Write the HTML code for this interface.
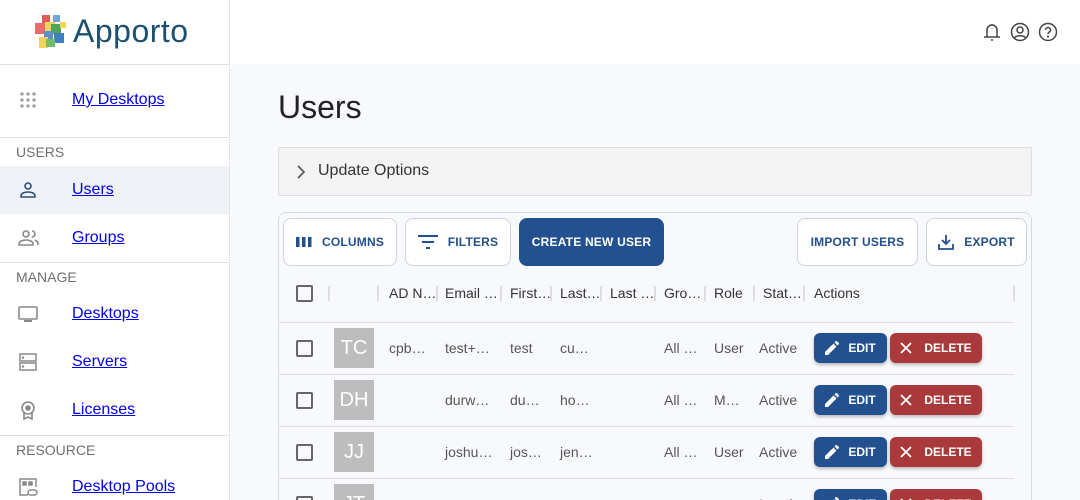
<!DOCTYPE html>
<html style="width:1080px;height:500px;overflow:hidden"><head><style>
*{box-sizing:border-box;margin:0;padding:0}
body{width:1080px;height:500px;overflow:hidden;font-family:"Liberation Sans",Roboto,sans-serif;background:#f8f9fc;position:relative;color:#222}
.abs{position:absolute}
#side{left:0;top:0;width:230px;height:500px;background:#fff;border-right:1px solid #e2e4e8}
#top{left:230px;top:0;width:850px;height:64px;background:#fff}
.hr{position:absolute;left:0;width:229px;height:1px;background:#e0e0e0}
.lab{position:absolute;left:16px;font-size:14px;color:#6f6f6f}
.item{position:absolute;left:0;width:229px;height:48px}
.item a{position:absolute;left:72px;top:50%;transform:translateY(-50%);color:#0000ee;font-size:16px;text-decoration:underline}
.item svg{position:absolute;left:18px;top:50%;transform:translateY(-50%)}
.btn{position:absolute;top:218px;height:48px;border:1px solid #d0d4da;border-radius:8px;background:#fff;color:#234f8d;font-size:12px;font-weight:bold;letter-spacing:.2px;display:flex;align-items:center;justify-content:center;gap:10px}
.th{position:absolute;top:285px;font-size:14px;color:#333;white-space:nowrap}
.sep{position:absolute;top:286px;width:2px;height:15px;background:#ddd}
.cb{position:absolute;left:296px;width:17px;height:17px;border:2px solid #666;border-radius:2px}
.av{position:absolute;left:334px;width:40px;height:40px;background:#bdbdbd;color:#fff;font-size:20px;display:flex;align-items:center;justify-content:center}
.td{position:absolute;font-size:14px;color:#555}
.rl{position:absolute;left:279px;width:735px;height:1px;background:#e0e0e0}
.ed{position:absolute;left:814px;width:73px;height:30px;background:#23518f;border-radius:6px;color:#fff;font-size:12px;font-weight:bold;display:flex;align-items:center;justify-content:center;gap:9px;box-shadow:0 2px 3px rgba(0,0,0,.25)}
.de{position:absolute;left:890px;width:92px;height:30px;background:#a9393a;border-radius:6px;color:#fff;font-size:12px;font-weight:bold;display:flex;align-items:center;justify-content:center;gap:12px;box-shadow:0 2px 3px rgba(0,0,0,.25)}
</style></head><body>
<div id="side" class="abs">
 <svg class="abs" style="left:34px;top:14px" width="36" height="36" viewBox="0 0 36 36">
  <rect x="1" y="9" width="11" height="11" fill="#e86a6a"/><rect x="8" y="1" width="8" height="8" fill="#e05a5a"/><rect x="19" y="1" width="7" height="7" fill="#6aa9d8"/>
  <rect x="11" y="8" width="10" height="10" fill="#f2d45a"/><rect x="17" y="10" width="10" height="10" fill="#4ea65a"/><rect x="26" y="8" width="6" height="6" fill="#f2d45a"/>
  <rect x="10" y="17" width="9" height="9" fill="#5b8fc9"/><rect x="20" y="19" width="10" height="10" fill="#3f7fbf"/><rect x="5" y="23" width="9" height="11" fill="#f2d45a"/><rect x="12" y="25" width="9" height="8" fill="#6fbf6a"/>
 </svg>
 <div class="abs" style="left:73px;top:13px;font-size:32px;color:#1b5071;letter-spacing:.5px">Apporto</div>
 <div class="hr" style="top:64px"></div>
 <div class="item" style="top:76px"><svg width="20" height="20" viewBox="0 0 20 20" fill="#999"><circle cx="4" cy="4" r="1.6"/><circle cx="10" cy="4" r="1.6"/><circle cx="16" cy="4" r="1.6"/><circle cx="4" cy="10" r="1.6"/><circle cx="10" cy="10" r="1.6"/><circle cx="16" cy="10" r="1.6"/><circle cx="4" cy="16" r="1.6"/><circle cx="10" cy="16" r="1.6"/><circle cx="16" cy="16" r="1.6"/></svg><a>My Desktops</a></div>
 <div class="hr" style="top:137px"></div>
 <div class="lab" style="top:144px">USERS</div>
 <div class="item" style="top:166px;background:#eef1f5"><svg width="20" height="20" viewBox="0 0 20 20" fill="none" stroke="#2d4f78" stroke-width="1.6"><circle cx="10" cy="6" r="3"/><path d="M3 17v-1c0-3 4-4 7-4s7 1 7 4v1z"/></svg><a>Users</a></div>
 <div class="item" style="top:214px"><svg width="22" height="20" viewBox="0 0 22 20" fill="none" stroke="#888" stroke-width="1.6"><circle cx="8" cy="6" r="3"/><path d="M1 17v-1c0-3 4-4 7-4s7 1 7 4v1z"/><path d="M14 3a3 3 0 010 6M17 12c2 1 3 2 3 4v1"/></svg><a>Groups</a></div>
 <div class="hr" style="top:262px"></div>
 <div class="lab" style="top:269px">MANAGE</div>
 <div class="item" style="top:290px"><svg width="20" height="20" viewBox="0 0 20 20" fill="none" stroke="#888" stroke-width="1.6"><rect x="1" y="3" width="18" height="12" rx="1"/><path d="M6 17h8" stroke-width="2"/></svg><a>Desktops</a></div>
 <div class="item" style="top:338px"><svg width="20" height="20" viewBox="0 0 20 20" fill="none" stroke="#888" stroke-width="1.5"><rect x="2" y="2" width="16" height="7"/><rect x="2" y="11" width="16" height="7"/><circle cx="5" cy="5.5" r=".5"/><circle cx="5" cy="14.5" r=".5"/></svg><a>Servers</a></div>
 <div class="item" style="top:386px"><svg width="20" height="20" viewBox="0 0 20 20" fill="none" stroke="#888" stroke-width="1.6"><circle cx="10" cy="8" r="6"/><circle cx="10" cy="8" r="2" fill="#888"/><path d="M6 13v6l4-2 4 2v-6"/></svg><a>Licenses</a></div>
 <div class="hr" style="top:435px"></div>
 <div class="lab" style="top:442px">RESOURCE</div>
 <div class="item" style="top:463px"><svg width="20" height="20" viewBox="0 0 20 20" fill="none" stroke="#888" stroke-width="1.5"><path d="M10 18H2V2h16v8"/><rect x="5" y="5" width="3" height="3" fill="#888"/><rect x="11" y="5" width="3" height="3" fill="#888"/><rect x="10" y="13" width="9" height="5" rx="2.5"/></svg><a>Desktop Pools</a></div>
</div>
<div id="top" class="abs">
 <svg class="abs" style="left:752px;top:22px" width="80" height="20" viewBox="0 0 80 20" fill="none" stroke="#444" stroke-width="1.5">
  <path d="M5 15V8a5 5 0 0110 0v7M2 15h16M9 18h2M10 2v1"/>
  <circle cx="38" cy="10" r="8.5"/><circle cx="38" cy="8" r="3"/><path d="M32 16c3-3 9-3 12 0"/>
  <circle cx="66" cy="10" r="8.5"/><path d="M63.5 8a2.5 2.5 0 115 0c0 2-2.5 2-2.5 4"/><circle cx="66" cy="14.5" r=".4" fill="#444"/>
 </svg>
</div>
<div class="abs" style="left:278px;top:89px;font-size:32px;color:#222">Users</div>
<div class="abs" style="left:278px;top:147px;width:754px;height:49px;background:#f3f3f3;border:1px solid #dedede;border-radius:2px">
 <svg class="abs" style="left:16px;top:17px" width="12" height="14" viewBox="0 0 12 14" fill="none" stroke="#555" stroke-width="1.6"><path d="M3 1l6 6-6 6"/></svg>
 <div class="abs" style="left:39px;top:14px;font-size:16px;color:#333">Update Options</div>
</div>
<div class="abs" style="left:278px;top:212px;width:754px;height:320px;border:1px solid #d8dbe0;border-radius:8px"></div>
<div class="btn" style="left:283px;width:114px"><svg width="16" height="12" viewBox="0 0 16 12" fill="#234f8d"><rect x="0" y="1" width="3.5" height="10"/><rect x="6" y="1" width="3.5" height="10"/><rect x="12" y="1" width="3.5" height="10"/></svg>COLUMNS</div>
<div class="btn" style="left:405px;width:106px"><svg width="20" height="14" viewBox="0 0 20 14" fill="#234f8d"><rect x="0" y="0" width="20" height="2"/><rect x="4" y="6" width="12" height="2"/><rect x="8" y="12" width="4" height="2"/></svg>FILTERS</div>
<div class="btn" style="left:519px;width:145px;background:#23518f;border-color:#23518f;color:#fff">CREATE NEW USER</div>
<div class="btn" style="left:797px;width:121px">IMPORT USERS</div>
<div class="btn" style="left:926px;width:101px"><svg width="16" height="16" viewBox="0 0 16 16" fill="none" stroke="#234f8d" stroke-width="1.8"><path d="M8 1v9M4 6l4 4 4-4M1 10v5h14v-5"/></svg>EXPORT</div>
<div class="cb" style="top:285px"></div>
<div class="sep" style="left:328px"></div><div class="sep" style="left:377px"></div>
<div class="th" style="left:389px">AD N…</div><div class="sep" style="left:436px"></div>
<div class="th" style="left:445px">Email …</div><div class="sep" style="left:500px"></div>
<div class="th" style="left:510px">First…</div><div class="sep" style="left:550px"></div>
<div class="th" style="left:560px">Last…</div><div class="sep" style="left:600px"></div>
<div class="th" style="left:610px">Last …</div><div class="sep" style="left:654px"></div>
<div class="th" style="left:664px">Gro…</div><div class="sep" style="left:704px"></div>
<div class="th" style="left:714px">Role</div><div class="sep" style="left:753px"></div>
<div class="th" style="left:763px">Stat…</div><div class="sep" style="left:803px"></div>
<div class="th" style="left:814px">Actions</div><div class="sep" style="left:1013px"></div>
<div class="rl" style="top:322px"></div>
<div class="rl" style="top:374px"></div>
<div class="rl" style="top:426px"></div>
<div class="rl" style="top:478px"></div>
<div class="cb" style="top:340px"></div><div class="av" style="top:328px">TC</div>
<div class="td" style="left:389px;top:340px">cpb…</div><div class="td" style="left:445px;top:340px">test+…</div><div class="td" style="left:510px;top:340px">test</div><div class="td" style="left:560px;top:340px">cu…</div><div class="td" style="left:664px;top:340px">All …</div><div class="td" style="left:714px;top:340px">User</div><div class="td" style="left:759px;top:340px">Active</div>
<div class="cb" style="top:392px"></div><div class="av" style="top:380px">DH</div>
<div class="td" style="left:445px;top:392px">durw…</div><div class="td" style="left:510px;top:392px">du…</div><div class="td" style="left:560px;top:392px">ho…</div><div class="td" style="left:664px;top:392px">All …</div><div class="td" style="left:714px;top:392px">M…</div><div class="td" style="left:759px;top:392px">Active</div>
<div class="cb" style="top:444px"></div><div class="av" style="top:432px">JJ</div>
<div class="td" style="left:445px;top:444px">joshu…</div><div class="td" style="left:510px;top:444px">jos…</div><div class="td" style="left:560px;top:444px">jen…</div><div class="td" style="left:664px;top:444px">All …</div><div class="td" style="left:714px;top:444px">User</div><div class="td" style="left:759px;top:444px">Active</div>
<div class="cb" style="top:496px"></div><div class="av" style="top:484px">JT</div>
<div class="td" style="left:759px;top:496px">Inactive</div>
<div class="ed" style="top:333px"><svg width="14" height="14" viewBox="0 0 14 14" fill="#fff"><path d="M0 11v3h3l8.5-8.5-3-3zM13.7 3.3a1 1 0 000-1.4L12.1.3a1 1 0 00-1.4 0L9.5 1.5l3 3z"/></svg>EDIT</div>
<div class="de" style="top:333px"><svg width="12" height="12" viewBox="0 0 12 12" stroke="#fff" stroke-width="1.8"><path d="M1 1l10 10M11 1L1 11"/></svg>DELETE</div>
<div class="ed" style="top:385px"><svg width="14" height="14" viewBox="0 0 14 14" fill="#fff"><path d="M0 11v3h3l8.5-8.5-3-3zM13.7 3.3a1 1 0 000-1.4L12.1.3a1 1 0 00-1.4 0L9.5 1.5l3 3z"/></svg>EDIT</div>
<div class="de" style="top:385px"><svg width="12" height="12" viewBox="0 0 12 12" stroke="#fff" stroke-width="1.8"><path d="M1 1l10 10M11 1L1 11"/></svg>DELETE</div>
<div class="ed" style="top:437px"><svg width="14" height="14" viewBox="0 0 14 14" fill="#fff"><path d="M0 11v3h3l8.5-8.5-3-3zM13.7 3.3a1 1 0 000-1.4L12.1.3a1 1 0 00-1.4 0L9.5 1.5l3 3z"/></svg>EDIT</div>
<div class="de" style="top:437px"><svg width="12" height="12" viewBox="0 0 12 12" stroke="#fff" stroke-width="1.8"><path d="M1 1l10 10M11 1L1 11"/></svg>DELETE</div>
<div class="ed" style="top:489px"><svg width="14" height="14" viewBox="0 0 14 14" fill="#fff"><path d="M0 11v3h3l8.5-8.5-3-3zM13.7 3.3a1 1 0 000-1.4L12.1.3a1 1 0 00-1.4 0L9.5 1.5l3 3z"/></svg>EDIT</div>
<div class="de" style="top:489px"><svg width="12" height="12" viewBox="0 0 12 12" stroke="#fff" stroke-width="1.8"><path d="M1 1l10 10M11 1L1 11"/></svg>DELETE</div>
</body></html>
